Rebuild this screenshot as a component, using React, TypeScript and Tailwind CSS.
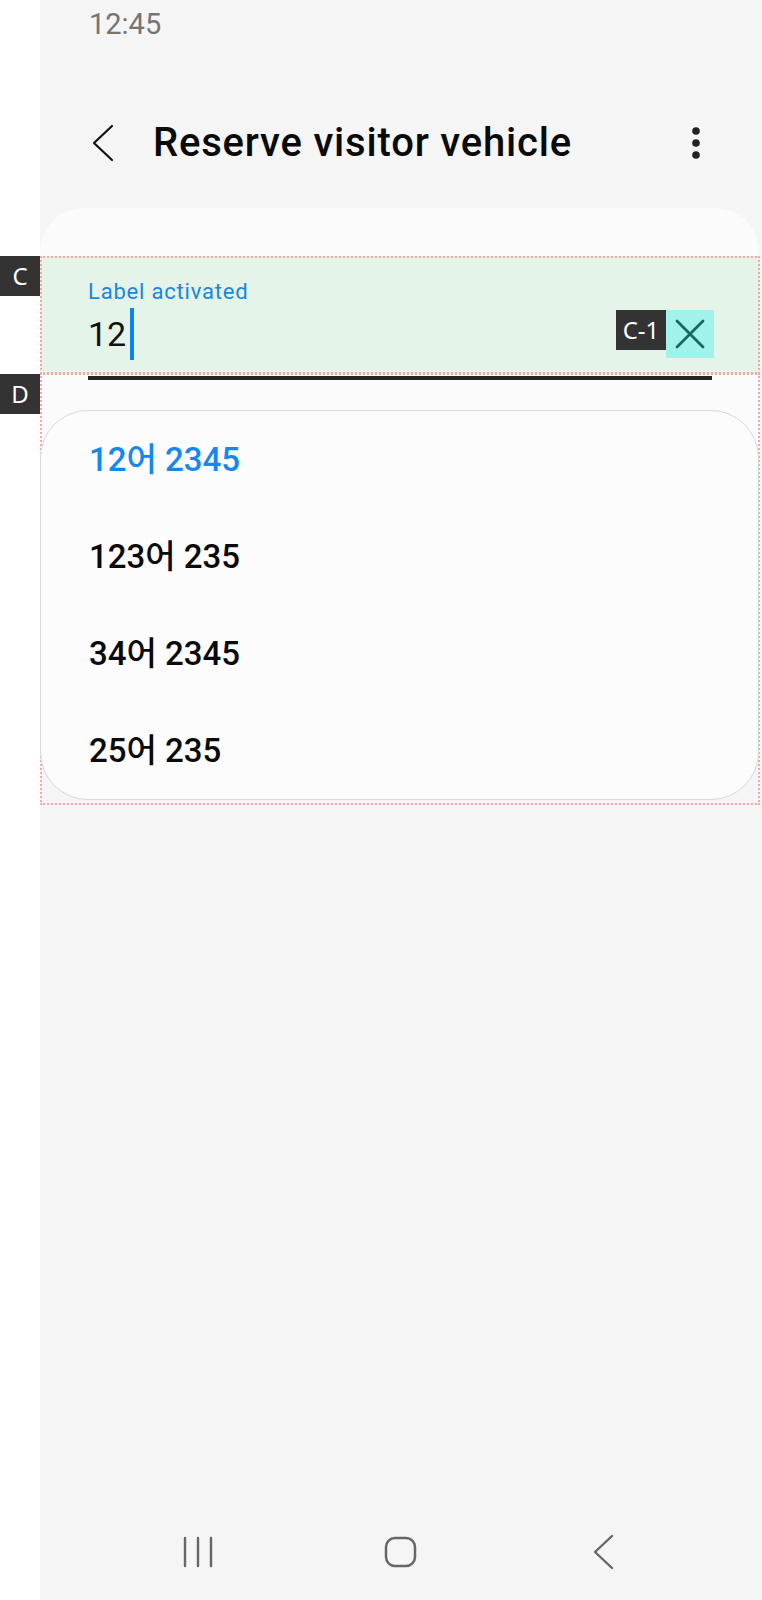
import React from "react";

const font = { fontFamily: 'Roboto, "Noto Sans CJK KR", "Noto Sans", sans-serif' };

function Badge({ children }: { children: React.ReactNode }) {
  return (
    <div className="flex h-[40px] w-[40px] items-center justify-center bg-[#333333] font-['Noto_Sans',sans-serif] text-[24px] leading-none text-white">
      {children}
    </div>
  );
}

export default function App() {
  const items = [
    { t: "12어 2345", active: true },
    { t: "123어 235", active: false },
    { t: "34어 2345", active: false },
    { t: "25어 235", active: false },
  ];
  return (
    <div className="flex h-[1600px] w-[762px] bg-white" style={font}>
      {/* left annotation strip */}
      <div className="flex w-[40px] shrink-0 flex-col bg-white">
        <div className="mt-[256px]">
          <Badge>C</Badge>
        </div>
        <div className="mt-[78px]">
          <Badge>D</Badge>
        </div>
      </div>

      {/* phone screen */}
      <div className="relative flex w-[722px] flex-col bg-[#f5f5f5]">
        {/* status bar */}
        <div className="h-[93px] pl-[49px] pt-[7px] text-[29px] leading-[34px] text-[#747474]">12:45</div>

        {/* header */}
        <div className="flex h-[100px] items-center pl-[52px] pr-[61px]">
          <svg width="22" height="40" viewBox="0 0 22 40" className="shrink-0">
            <path d="M20 3 L2 20 L20 37" fill="none" stroke="#111" strokeWidth="2.2" strokeLinecap="round" strokeLinejoin="round" />
          </svg>
          <div className="ml-[39px] text-[40px] font-medium leading-[44px] tracking-[0.8px] text-[#0a0a0a]">
            Reserve visitor vehicle
          </div>
          <div className="flex-1" />
          <svg width="10" height="36" viewBox="0 0 10 36" className="shrink-0">
            <circle cx="5" cy="6" r="3.8" fill="#222" />
            <circle cx="5" cy="18" r="3.8" fill="#222" />
            <circle cx="5" cy="30" r="3.8" fill="#222" />
          </svg>
        </div>

        {/* card */}
        <div className="mt-[15px] h-[280px] w-[719px] rounded-t-[44px] bg-[#fbfbfb] pt-[48px]">
          <div className="w-[720px] border-2 border-dotted border-[#f6a8a8] bg-[#e4f4e8] pb-[12px] pl-[46px] pr-[44px] pt-[22px]">
            <div className="text-[22px] leading-[24px] tracking-[0.8px] text-[#1787e6]">Label activated</div>
            <div className="mt-[4px] flex h-[52px] items-center">
              <span className="text-[34px] leading-[52px] text-[#111]">12</span>
              <span className="ml-[4px] h-[52px] w-[4px] bg-[#0a84f0]" />
              <div className="flex-1" />
              <div className="flex items-start self-start pt-[2px]">
                <div className="flex h-[40px] w-[50px] items-center justify-center bg-[#333333] font-['Noto_Sans',sans-serif] text-[24px] leading-none text-white">
                  C-1
                </div>
                <div className="flex h-[48px] w-[48px] items-center justify-center bg-[#a0f3ea]">
                  <svg width="32" height="32" viewBox="0 0 32 32">
                    <path d="M3 3 L29 29 M29 3 L3 29" stroke="#17695d" strokeWidth="2.8" strokeLinecap="round" fill="none" />
                  </svg>
                </div>
              </div>
            </div>
          </div>
          <div className="ml-[48px] mt-[2px] h-[4px] w-[624px] bg-[#252525]" />
        </div>

        {/* D overlay with dropdown */}
        <div className="absolute left-0 top-[373px] h-[432px] w-[720px] border-2 border-dotted border-[#f6a8a8] pt-[35px]">
          <div className="-ml-[2px] w-[719px] overflow-hidden rounded-[48px] border border-[#d8d8d8] bg-[#fcfcfc]">
            {items.map((it) => (
              <div
                key={it.t}
                className={`flex h-[97px] items-center pl-[48px] text-[33px] font-medium ${
                  it.active ? "text-[#1488f2]" : "text-[#0a0a0a]"
                }`}
              >
                {it.t}
              </div>
            ))}
          </div>
        </div>

        <div className="flex-1" />

        {/* nav bar */}
        <div className="flex h-[96px] items-center pl-[56px]">
          <div className="flex w-[203px] justify-center">
            <svg width="30" height="32" viewBox="0 0 30 32">
              <path d="M2 2 V30 M15 2 V30 M28 2 V30" stroke="#666" strokeWidth="2.4" strokeLinecap="round" />
            </svg>
          </div>
          <div className="flex w-[203px] justify-center">
            <svg width="33" height="32" viewBox="0 0 33 32">
              <rect x="2" y="2" width="29" height="28" rx="9" fill="none" stroke="#666" strokeWidth="2.5" />
            </svg>
          </div>
          <div className="flex w-[203px] justify-center">
            <svg width="22" height="36" viewBox="0 0 22 36">
              <path d="M19 2 L2 18 L19 34" fill="none" stroke="#666" strokeWidth="2.4" strokeLinecap="round" strokeLinejoin="round" />
            </svg>
          </div>
        </div>
      </div>
    </div>
  );
}
